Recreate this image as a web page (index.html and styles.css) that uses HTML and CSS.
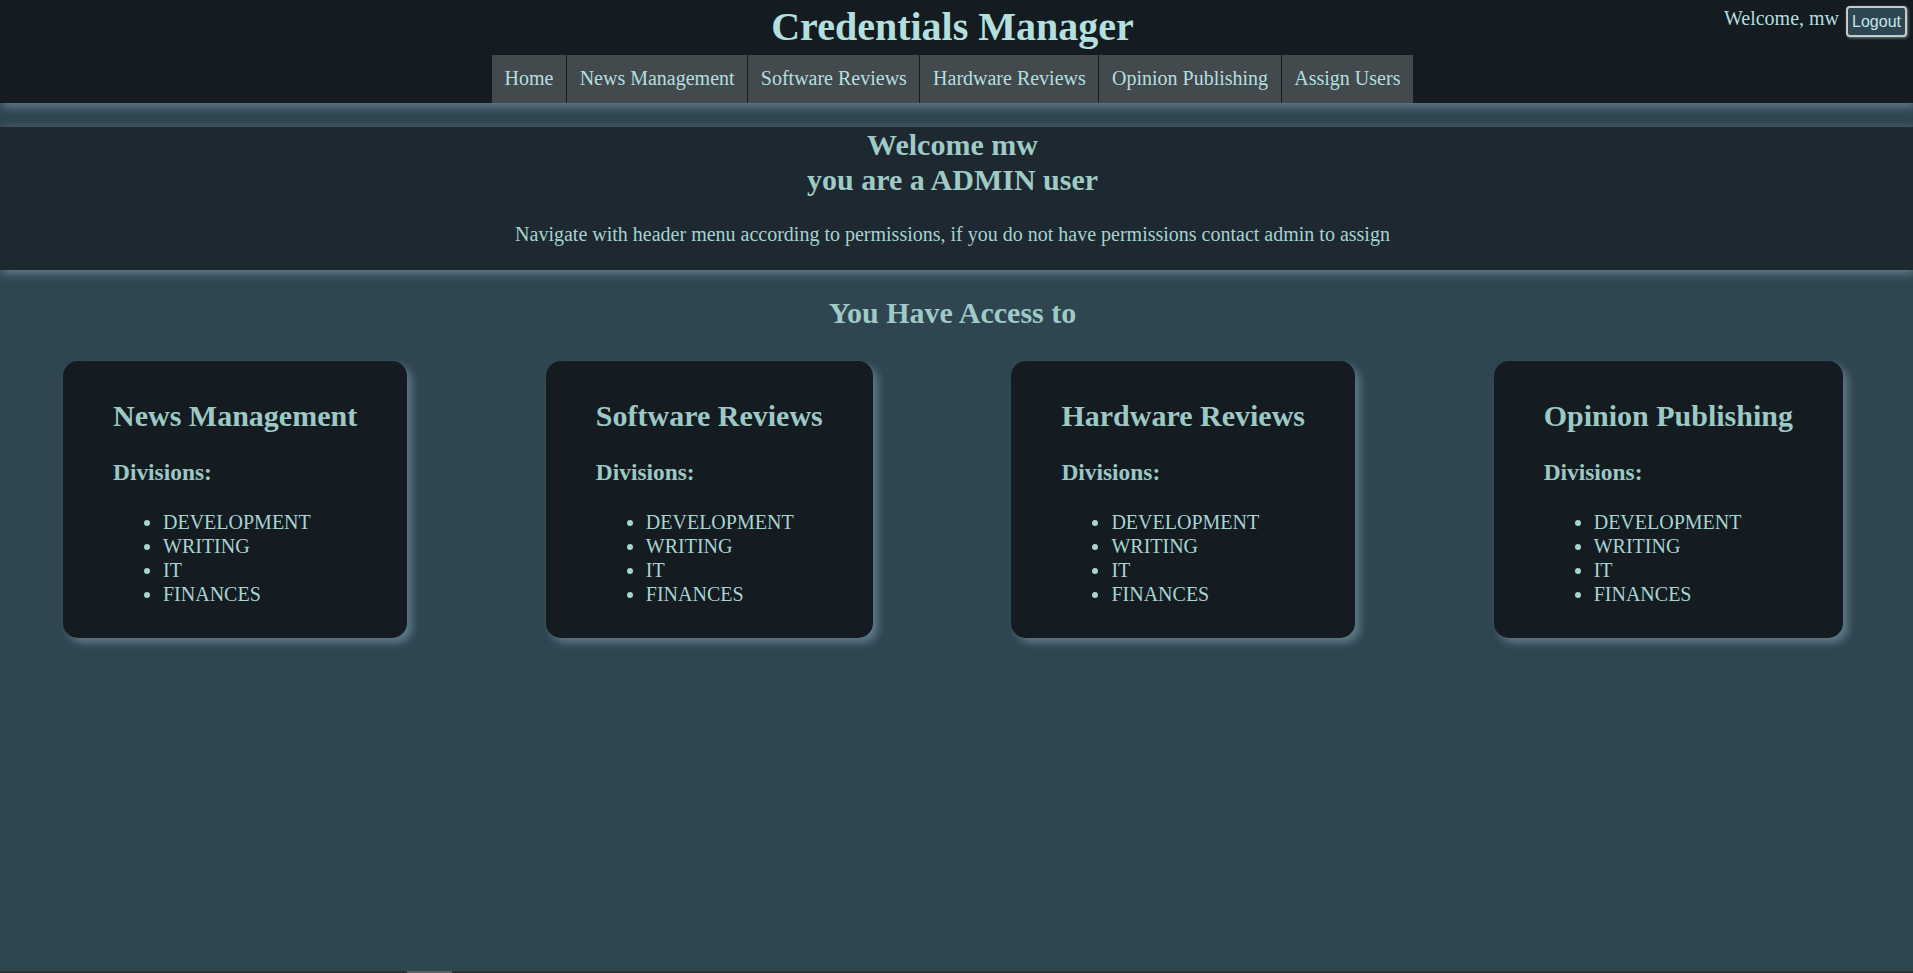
FILE: index.html
```html
<!DOCTYPE html>
<html lang="en">
<head>
<meta charset="utf-8">
<title>Credentials Manager</title>
<link rel="stylesheet" href="styles.css">
</head>
<body>
<header class="site-header">
  <h1 class="site-title">Credentials Manager</h1>
  <nav class="main-nav">
    <ul class="nav-list">
      <li class="nav-item"><a class="nav-link" href="#">Home</a></li>
      <li class="nav-item"><a class="nav-link" href="#">News Management</a></li>
      <li class="nav-item"><a class="nav-link" href="#">Software Reviews</a></li>
      <li class="nav-item"><a class="nav-link" href="#">Hardware Reviews</a></li>
      <li class="nav-item"><a class="nav-link" href="#">Opinion Publishing</a></li>
      <li class="nav-item"><a class="nav-link" href="#">Assign Users</a></li>
    </ul>
  </nav>
  <div class="user-box">
    <span class="user-greeting">Welcome, mw</span>
    <button class="logout-btn" type="button">Logout</button>
  </div>
</header>

<section class="welcome">
  <h2 class="welcome-title">Welcome mw<br>you are a ADMIN user</h2>
  <p class="welcome-text">Navigate with header menu according to permissions, if you do not have permissions contact admin to assign</p>
</section>

<main class="access">
  <h2 class="access-title">You Have Access to</h2>
  <div class="cards">
    <div class="card">
      <h2 class="card-title">News Management</h2>
      <h3 class="card-subtitle">Divisions:</h3>
      <ul class="division-list">
        <li>DEVELOPMENT</li>
        <li>WRITING</li>
        <li>IT</li>
        <li>FINANCES</li>
      </ul>
    </div>
    <div class="card">
      <h2 class="card-title">Software Reviews</h2>
      <h3 class="card-subtitle">Divisions:</h3>
      <ul class="division-list">
        <li>DEVELOPMENT</li>
        <li>WRITING</li>
        <li>IT</li>
        <li>FINANCES</li>
      </ul>
    </div>
    <div class="card">
      <h2 class="card-title">Hardware Reviews</h2>
      <h3 class="card-subtitle">Divisions:</h3>
      <ul class="division-list">
        <li>DEVELOPMENT</li>
        <li>WRITING</li>
        <li>IT</li>
        <li>FINANCES</li>
      </ul>
    </div>
    <div class="card">
      <h2 class="card-title">Opinion Publishing</h2>
      <h3 class="card-subtitle">Divisions:</h3>
      <ul class="division-list">
        <li>DEVELOPMENT</li>
        <li>WRITING</li>
        <li>IT</li>
        <li>FINANCES</li>
      </ul>
    </div>
  </div>
</main>

<div class="hscroll"><span class="hscroll-thumb"></span></div>
</body>
</html>
```
FILE: styles.css
```css
html {
  background: #2f4550;
}

body {
  margin: 0;
  min-height: 973px;
  font-family: "Liberation Serif", "Times New Roman", serif;
  font-size: 20px;
  color: #a8d4d3;
  background: #2f4550;
}

/* ---------- header ---------- */
.site-header {
  position: relative;
  background: #141b21;
  text-align: center;
  padding: 3px 8px 0 0;
  box-shadow: 2px 3px 10px #6c8592;
}

.site-title {
  margin: 0 0 5px;
  font-size: 40px;
  font-weight: bold;
  color: #b3e0df;
}

.main-nav {
  display: flex;
  justify-content: center;
}

.nav-list {
  display: flex;
  margin: 0;
  padding: 0;
  list-style: none;
  background: #434a4d;
}

.nav-item + .nav-item {
  border-left: 1px solid #141b21;
}

.nav-link {
  display: block;
  padding: 12px 12.6px 13px;
  line-height: 23px;
  color: #b3dfe0;
  text-decoration: none;
}

.user-box {
  position: absolute;
  top: 6px;
  right: 6px;
  display: flex;
  align-items: flex-start;
  gap: 7px;
}

.user-greeting {
  padding-top: 1px;
  line-height: 23px;
  color: #b3dfe0;
}

.logout-btn {
  font-family: "Liberation Sans", Arial, sans-serif;
  font-size: 16px;
  line-height: 19px;
  color: #c2e8ea;
  background: #2f4550;
  border: 2px solid #c6cbcc;
  border-radius: 4px;
  padding: 4px 4px;
  box-shadow: 1px 1px 3px #6c8592;
}

/* ---------- welcome ---------- */
.welcome {
  margin-top: 24px;
  padding-right: 8px;
  background: #1d2830;
  text-align: center;
  box-shadow: 2px 3px 10px #6c8592;
}

.welcome-title {
  margin: 0 0 26px;
  font-size: 30px;
  line-height: 35px;
  color: #9fcac6;
}

.welcome-text {
  margin: 0;
  padding-bottom: 24px;
  line-height: 23px;
  color: #a6d3d2;
}

/* ---------- access ---------- */
.access {
  padding-right: 8px;
}

.access-title {
  margin: 25.5px 0 31px;
  font-size: 30px;
  line-height: 34.5px;
  text-align: center;
  color: #9fcac6;
}

.cards {
  display: flex;
  justify-content: space-between;
  align-items: flex-start;
  padding: 0 62px 0 63px;
}

.card {
  background: #141b21;
  border-radius: 15px;
  padding: 13px 50px 12px;
  box-shadow: 5px 5px 8px #5f7a88;
}

.card-title {
  margin: 25px 0;
  font-size: 30px;
  color: #9cc8c6;
}

.card-subtitle {
  margin: 25.5px 0 24px;
  font-size: 23.4px;
  color: #9cc8c6;
}

.division-list {
  margin: 0 0 20px;
  padding-left: 50px;
  line-height: 24px;
  color: #a8d4d3;
}

/* ---------- bottom scrollbar fragment ---------- */
.hscroll {
  position: fixed;
  left: 0;
  right: 0;
  bottom: 0;
  height: 2px;
  background: #2b3134;
}

.hscroll-thumb {
  position: absolute;
  left: 407px;
  top: 0;
  width: 45px;
  height: 2px;
  background: #5c6063;
}
```
